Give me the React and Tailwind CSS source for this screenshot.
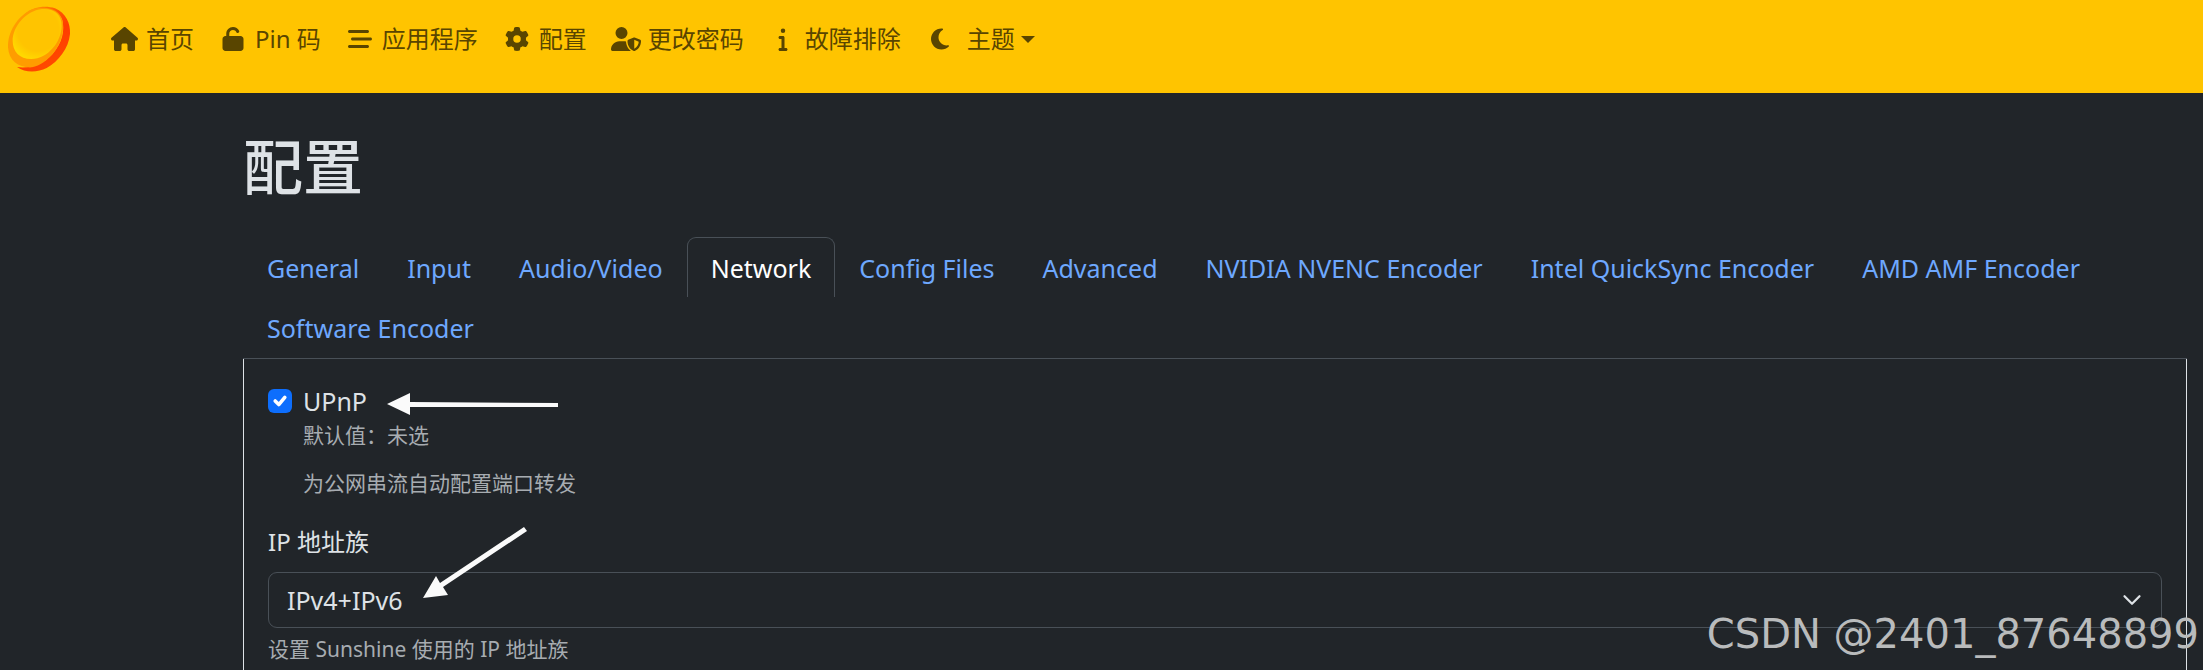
import React from "react";
import {
  FaHouse,
  FaUnlock,
  FaBarsStaggered,
  FaGear,
  FaUserShield,
  FaInfo,
  FaMoon,
} from "react-icons/fa6";

const links = [
  { label: "首页", Icon: FaHouse, size: "h-6 w-[27px]" },
  { label: "Pin 码", Icon: FaUnlock, size: "h-6 w-6" },
  { label: "应用程序", Icon: FaBarsStaggered, size: "h-6 w-6" },
  { label: "配置", Icon: FaGear, size: "h-6 w-6" },
  { label: "更改密码", Icon: FaUserShield, size: "h-6 w-[30px]" },
  { label: "故障排除", Icon: FaInfo, size: "h-6 w-6" },
];

const tabs = [
  "General",
  "Input",
  "Audio/Video",
  "Network",
  "Config Files",
  "Advanced",
  "NVIDIA NVENC Encoder",
  "Intel QuickSync Encoder",
  "AMD AMF Encoder",
  "Software Encoder",
];

function Logo() {
  return (
    <svg className="h-[78px] w-[78px]" viewBox="0 0 234 234" aria-hidden="true">
      <defs>
        <linearGradient id="rim" x1="0.2" y1="0" x2="0.6" y2="1">
          <stop offset="0" stopColor="#ff9a00" />
          <stop offset="0.25" stopColor="#ff5a00" />
          <stop offset="0.5" stopColor="#ff3c00" />
          <stop offset="1" stopColor="#ff4a00" />
        </linearGradient>
        <radialGradient id="face" cx="0.52" cy="0.42" r="0.6">
          <stop offset="0.7" stopColor="#ffc400" />
          <stop offset="1" stopColor="#ffd800" />
        </radialGradient>
      </defs>
      <path
        fill="url(#rim)"
        d="M72 44C100 20 135 16 165 25C198 38 212 72 210 102C206 145 176 184 140 204C112 218 76 219 51 201C90 207 130 192 158 162C186 130 196 92 186 58C176 30 120 12 72 44Z"
      />
      <path
        fill="#ff9c00"
        d="M96 28C52 48 22 98 24 142C27 184 56 204 96 202C142 192 194 136 189 68C184 44 170 28 140 24C124 22 108 23 96 28Z"
      />
      <path
        fill="url(#face)"
        d="M38 122C38 82 76 32 126 27C164 24 186 46 185 78C184 126 144 176 94 177C58 177 38 154 38 122Z"
      />
    </svg>
  );
}

function Arrows() {
  return (
    <svg
      className="pointer-events-none absolute left-0 top-0 h-[260px] w-[340px]"
      viewBox="0 0 340 260"
      fill="#fafafa"
      aria-hidden="true"
    >
      <path d="M143 45L166 34V43L314 44V48L166 48V56Z" />
      <path d="M179 239L192 217L196 224L280 168L283 172L199 228L204 236Z" />
    </svg>
  );
}

export default function App() {
  return (
    <div className="relative flex min-h-screen flex-col overflow-hidden bg-[#212529] font-['Noto_Sans','Noto_Sans_CJK_SC',sans-serif] text-2xl leading-9 text-[#dee2e6]">
      <nav className="flex min-h-[93px] items-start bg-[#ffc400] text-[#594500]">
        <a href="#" aria-label="Sunshine" className="mr-[19px]">
          <Logo />
        </a>
        <ul className="flex pt-[9px]">
          {links.map(({ label, Icon, size }) => (
            <li key={label}>
              <a href="#" className="flex items-center gap-[7px] px-3 py-3 whitespace-nowrap">
                <span className="flex w-[30px] justify-center">
                  <Icon className={size} />
                </span>
                {label}
              </a>
            </li>
          ))}
          <li>
            <button type="button" className="flex items-center gap-3 px-3 py-3 whitespace-nowrap">
              <span className="flex w-[30px] justify-center">
                <FaMoon className="h-6 w-6" />
              </span>
              <span className="flex items-center gap-1.5">
                主题
                <svg className="h-[7px] w-3.5" viewBox="0 0 14 7" fill="currentColor" aria-hidden="true">
                  <path d="M0 0H14L7 7Z" />
                </svg>
              </span>
            </button>
          </li>
        </ul>
      </nav>

      <main className="mr-4 ml-[243px] flex flex-1 flex-col">
        <h1 className="mt-[38px] mb-[34px] text-6xl leading-[72px] font-medium">配置</h1>

        <div role="tablist" className="flex flex-wrap border-b border-[#495057] pb-px text-[25px] leading-9">
          {tabs.map((tab) => (
            <button
              key={tab}
              type="button"
              role="tab"
              aria-selected={tab === "Network"}
              className={
                tab === "Network"
                  ? "h-[60px] rounded-t-[9px] border border-b-0 border-[#495057] px-[23px] text-white"
                  : "h-[60px] border border-b-0 border-transparent px-[23px] text-[#6ea8fe]"
              }
            >
              {tab}
            </button>
          ))}
        </div>

        <section className="relative flex-1 border-x border-[#dee2e6] px-6 pt-6">
          <div className="flex items-center gap-3">
            <input id="upnp" type="checkbox" defaultChecked className="peer sr-only" />
            <label htmlFor="upnp" className="flex items-center gap-[11px] text-[25px] leading-9">
              <span className="flex size-6 items-center justify-center rounded-[6px] bg-[#0d6efd]">
                <svg className="size-6" viewBox="0 0 20 20" fill="none" stroke="#fff" strokeWidth="3" strokeLinecap="round" strokeLinejoin="round" aria-hidden="true">
                  <path d="m6 10 3 3 5-6" />
                </svg>
              </span>
              UPnP
            </label>
          </div>
          <div className="pl-[35px] text-[21px] leading-8 text-[#a7acb1]">
            <p>默认值：未选</p>
            <p className="mt-4">为公网串流自动配置端口转发</p>
          </div>

          <label htmlFor="family" className="mt-[25px] block">
            IP 地址族
          </label>
          <div className="relative mt-3">
            <select
              id="family"
              className="block h-14 w-full appearance-none rounded-[9px] border border-[#495057] bg-[#212529] px-[18px] text-[25px] leading-9"
            >
              <option>IPv4+IPv6</option>
            </select>
            <svg
              className="pointer-events-none absolute top-4 right-[18px] size-6"
              viewBox="0 0 16 16"
              fill="none"
              stroke="#dee2e6"
              strokeWidth="1.5"
              strokeLinecap="round"
              strokeLinejoin="round"
              aria-hidden="true"
            >
              <path d="m3 5.5 5 5 5-5" />
            </svg>
          </div>
          <p className="mt-[5px] text-[21px] leading-8 text-[#a7acb1]">设置 Sunshine 使用的 IP 地址族</p>
          <Arrows />
        </section>
      </main>

      <p className="absolute right-1 bottom-1.5 font-['DejaVu_Sans',sans-serif] text-[40px] leading-[60px] text-[#b9bbbc]">
        CSDN @2401_87648899
      </p>
    </div>
  );
}
